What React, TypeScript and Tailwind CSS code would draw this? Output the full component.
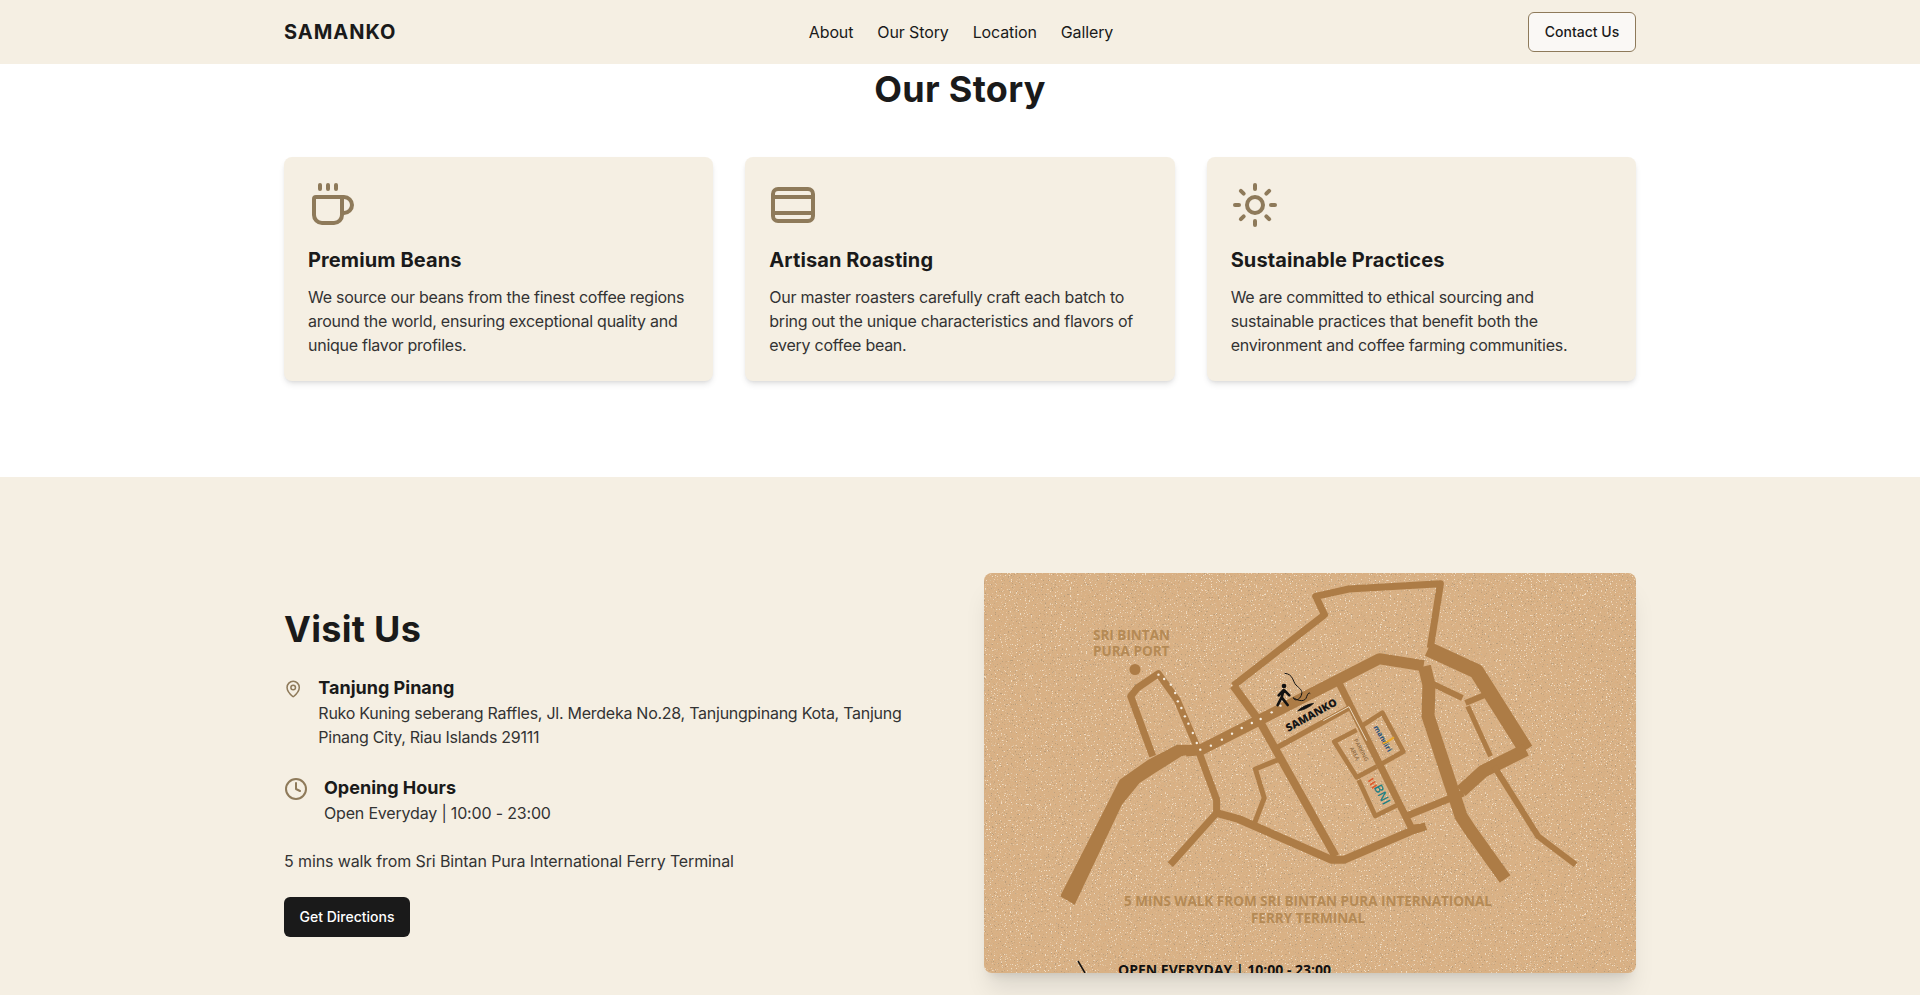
import React from 'react';
import { Coffee, Sun, MapPin, Clock } from 'lucide-react';

const iconClass = 'w-12 h-12 text-[#8e7a5a]';

const features = [
  {
    title: 'Premium Beans',
    text: 'We source our beans from the finest coffee regions around the world, ensuring exceptional quality and unique flavor profiles.',
    icon: <Coffee className={iconClass} />,
  },
  {
    title: 'Artisan Roasting',
    text: 'Our master roasters carefully craft each batch to bring out the unique characteristics and flavors of every coffee bean.',
    icon: (
      <svg className={iconClass} viewBox="0 0 24 24" fill="none" stroke="currentColor" strokeWidth="2" strokeLinecap="round">
        <rect x="2" y="4" width="20" height="16" rx="2.500" />
        <path d="M2 8h20M2 16h20" />
      </svg>
    ),
  },
  {
    title: 'Sustainable Practices',
    text: 'We are committed to ethical sourcing and sustainable practices that benefit both the environment and coffee farming communities.',
    icon: <Sun className={iconClass} />,
  },
];

// road coordinates were read off a 2.27 x 3 crop, convert them to map pixels
const pt = (x: number, y: number) => `${((x - 32) / 2.27).toFixed(1)},${((y - 40) / 3).toFixed(1)}`;
const line = (pts: number[][]) => pts.map(p => pt(p[0], p[1])).join(' ');

// the wide road on the left tapers, so it is a filled outline
const wideRoad = [
  [205, 1010], [340, 660], [405, 600], [470, 555], [510, 556], [522, 578], [480, 590], [420, 640], [385, 670], [345, 735], [238, 1035],
];

const roads: { w: number; pts: number[][] }[] = [
  { w: 11, pts: [[490, 574], [525, 570], [930, 297], [1030, 318]] },
  { w: 7, pts: [[598, 378], [805, 165], [785, 110], [860, 88], [1068, 72], [1045, 265]] },
  { w: 8, pts: [[598, 378], [660, 490], [830, 890]] },
  { w: 7, pts: [[415, 590], [365, 410], [380, 385], [428, 342], [470, 420], [515, 560], [560, 720], [560, 760], [455, 915]] },
  { w: 8, pts: [[560, 760], [610, 778], [820, 900], [850, 900], [1000, 815], [1035, 800]] },
  { w: 5, pts: [[700, 600], [648, 628], [668, 715], [645, 795]] },
  { w: 7, pts: [[990, 770], [1120, 700]] },
  { w: 15, pts: [[1040, 268], [1150, 335], [1262, 570]] },
  { w: 13, pts: [[1262, 570], [1165, 635], [1115, 695]] },
  { w: 13, pts: [[1032, 320], [1042, 375], [1040, 470], [1115, 770], [1135, 810], [1215, 958]] },
  { w: 6, pts: [[1050, 372], [1118, 415]] },
  { w: 6, pts: [[1125, 430], [1170, 405]] },
  { w: 5, pts: [[1130, 440], [1182, 590]] },
  { w: 6, pts: [[1190, 620], [1290, 830], [1375, 915]] },
];

const dots = [
  [428, 345], [441, 358], [456, 375], [466, 400], [472, 425], [480, 445], [488, 470], [496, 492], [506, 520], [515, 550],
  [523, 570], [547, 558], [572, 540], [595, 522], [617, 505], [640, 490], [660, 478], [685, 458], [705, 438],
];

const MapPicture = () => (
  <svg className="block w-full h-full" viewBox="0 0 652 400" style={{ fontFamily: '"Open Sans", sans-serif' }}>
    <defs>
      {/* cardboard: soft mottling plus sparse light and dark specks */}
      <filter id="mottle" x="0" y="0" width="100%" height="100%">
        <feTurbulence type="fractalNoise" baseFrequency="0.95" numOctaves="2" seed="7" />
        <feColorMatrix values="0 0 0 0 0.66  0 0 0 0 0.47  0 0 0 0 0.28  0 0 0 2.4 -0.95" />
        <feGaussianBlur stdDeviation="0.5" />
      </filter>
      <filter id="specksLight" x="0" y="0" width="100%" height="100%">
        <feTurbulence type="fractalNoise" baseFrequency="0.8" numOctaves="2" seed="4" />
        <feColorMatrix values="0 0 0 0 0.97  0 0 0 0 0.88  0 0 0 0 0.75  0 0 0 9 -5.800" />
        <feGaussianBlur stdDeviation="0.4" />
      </filter>
      <filter id="specksDark" x="0" y="0" width="100%" height="100%">
        <feTurbulence type="fractalNoise" baseFrequency="0.7" numOctaves="2" seed="19" />
        <feColorMatrix values="0 0 0 0 0.42  0 0 0 0 0.3  0 0 0 0 0.18  0 0 0 10 -6.700" />
        <feGaussianBlur stdDeviation="0.4" />
      </filter>
    </defs>
    <rect width="652" height="400" fill="#dab083" />
    <rect width="652" height="400" filter="url(#mottle)" opacity="0.7" />
    <rect width="652" height="400" filter="url(#specksLight)" opacity="0.7" />
    <rect width="652" height="400" filter="url(#specksDark)" opacity="0.7" />

    <polygon points={line(wideRoad)} fill="#ad7c46" />
    <g fill="none" stroke="#ad7c46" strokeLinejoin="round">
      {roads.map((r, i) => (
        <polyline key={i} points={line(r.pts)} strokeWidth={r.w} />
      ))}
    </g>
    <circle cx="151" cy="96.500" r="5.500" fill="#ad7c46" />
    {dots.map((d, i) => (
      <circle key={i} cx={(d[0] - 32) / 2.27} cy={(d[1] - 40) / 3} r="1.200" fill="#f7efe2" />
    ))}

    <g fill="#b58a55" fontWeight="700" fontSize="13.500">
      <text x="109" y="67">SRI BINTAN</text>
      <text x="109" y="83">PURA PORT</text>
      <text x="324" y="333" textAnchor="middle">5 MINS WALK FROM SRI BINTAN PURA INTERNATIONAL</text>
      <text x="324" y="350" textAnchor="middle">FERRY TERMINAL</text>
    </g>

    {/* centre of the map, drawn at 3x so it lines up with the detail crop */}
    <g transform="translate(216,77) scale(0.3333)">
      <g fill="none" stroke="#ad7c46" strokeLinejoin="round">
        <path d="M232 292L450 172" strokeWidth="16" />
        <path d="M415 95L635 535L675 530" strokeWidth="21" />
        <path d="M485 228L547 188L610 305L530 350" strokeWidth="14" />
        <path d="M470 240L403 275L470 382L530 350" strokeWidth="14" />
        <path d="M476 390L526 498L590 466" strokeWidth="14" />
      </g>
      <path d="M370 212L447 170L500 272" fill="none" stroke="#ead9c0" strokeWidth="3" />

      <g fill="none" stroke="#111" strokeLinecap="round" strokeLinejoin="round">
        <circle cx="252" cy="108" r="7" fill="#111" stroke="none" />
        <path d="M251 120L245 142L233 165M245 142L263 165M250 121L236 136M253 121L268 136" strokeWidth="8" />
        <path d="M255 70C280 72 278 95 288 105C298 115 308 120 305 132C302 150 282 155 280 143C290 150 310 158 318 145C322 135 325 125 330 130" strokeWidth="3" />
      </g>
      <path d="M293 183C310 181 330 171 341 160C325 162 305 170 293 183Z" fill="#111" stroke="#111" strokeWidth="2" />
      <text fontSize="32" fontWeight="800" fill="#161616" transform="translate(265,246) rotate(-29)">SAMANKO</text>

      <text fontSize="17" fontWeight="600" fill="#8d6a42" textAnchor="middle" transform="translate(478,303) rotate(62)">
        <tspan x="0" y="0">PARKING</tspan>
        <tspan x="0" y="22">AREA</tspan>
      </text>
      <text fontSize="22" fontWeight="700" fill="#1d4f7c" transform="translate(520,232) rotate(60)">mandiri</text>
      <path d="M548 280C560 278 572 270 582 262" fill="none" stroke="#e8a82a" strokeWidth="6" />
      <text fontSize="36" fontWeight="600" fill="#1f7f83" transform="translate(520,412) rotate(62)">BNI</text>
      <path d="M505 395L520 385M510 405L525 395M515 415L530 405" stroke="#dd5a2c" strokeWidth="5" />
    </g>

    <text x="134" y="402" fontSize="14" fontWeight="700" fill="#111">OPEN EVERYDAY | 10:00 - 23:00</text>
    <path d="M94 388l7 12" stroke="#111" strokeWidth="1.500" fill="none" />
  </svg>
);

export default function App() {
  return (
    <div className="h-screen overflow-hidden bg-white text-[#1a1a1a] font-['Inter',sans-serif]">
      <header className="h-16 bg-[#f5efe3] relative z-10">
        <div className="mx-auto w-[1352px] h-full flex items-center justify-between">
          <div className="w-[110px] text-xl font-bold tracking-wider">SAMANKO</div>
          <nav className="flex gap-6 text-base tracking-[-0.12px]">
            <a>About</a>
            <a>Our Story</a>
            <a>Location</a>
            <a>Gallery</a>
          </nav>
          <button className="h-10 w-[108px] rounded-md border border-[#8e7a5a] bg-[#faf8f5] text-sm font-medium">Contact Us</button>
        </div>
      </header>

      <section className="pt-[5px] pb-24">
        <div className="mx-auto w-[1352px]">
          <h2 className="text-4xl font-bold text-center tracking-[0.3px] mb-12">Our Story</h2>
          <div className="grid grid-cols-3 gap-8">
            {features.map(f => (
              <div key={f.title} className="bg-[#f5efe3] rounded-lg shadow-md p-6">
                <div className="mb-4">{f.icon}</div>
                <h3 className="text-xl font-bold pt-0.5 leading-[26px] tracking-[0.1px] mb-3">{f.title}</h3>
                <p className="text-[#333333] tracking-[-0.26px]">{f.text}</p>
              </div>
            ))}
          </div>
        </div>
      </section>

      <section className="bg-[#f5efe3] py-24">
        <div className="mx-auto w-[1352px] grid grid-cols-2 gap-12 items-center">
          <div>
            <h2 className="text-4xl font-bold tracking-[0.3px] mb-6">Visit Us</h2>
            <div className="flex gap-4 mb-6">
              <MapPin className="w-6 h-6 mt-1 text-[#8e7a5a]" />
              <div>
                <h3 className="text-lg font-bold pt-0.5 leading-[26px]">Tanjung Pinang</h3>
                <p className="text-[#333333] tracking-[-0.26px]">Ruko Kuning seberang Raffles, Jl. Merdeka No.28, Tanjungpinang Kota, Tanjung Pinang City, Riau Islands 29111</p>
              </div>
            </div>
            <div className="flex gap-4 mb-6">
              <Clock className="w-6 h-6 mt-1 shrink-0 text-[#8e7a5a]" />
              <div>
                <h3 className="text-lg font-bold pt-0.5 leading-[26px]">Opening Hours</h3>
                <p className="text-[#333333] tracking-[-0.18px]">Open Everyday | 10:00 - 23:00</p>
              </div>
            </div>
            <p className="text-[#333333] tracking-[-0.12px] mb-6">5 mins walk from Sri Bintan Pura International Ferry Terminal</p>
            <button className="h-10 w-[126px] rounded-md bg-[#1a1a1a] text-white text-sm font-medium">Get Directions</button>
          </div>
          <div className="h-[400px] rounded-lg overflow-hidden shadow-xl">
            <MapPicture />
          </div>
        </div>
      </section>
    </div>
  );
}
